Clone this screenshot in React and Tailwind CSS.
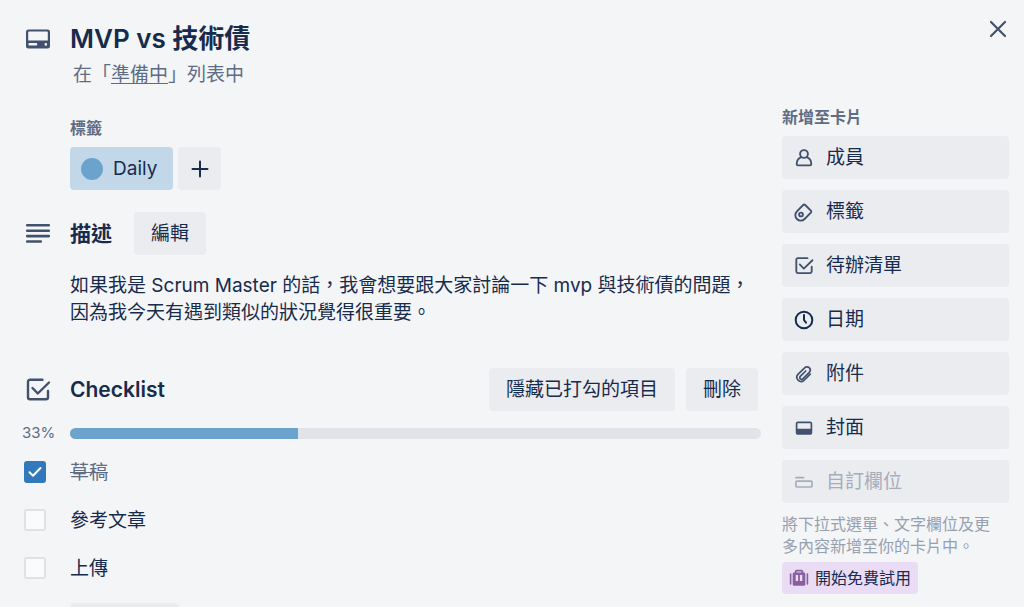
import React, { useState } from 'react';

const stroke = {
  fill: 'none',
  stroke: 'currentColor',
  strokeLinecap: 'round',
  strokeLinejoin: 'round',
  'aria-hidden': true,
};

function CardIcon() {
  return (
    <svg width="26" height="22" viewBox="0 0 26 22" aria-hidden="true" fill="currentColor">
      <path
        fillRule="evenodd"
        d="M3.500 1.400h19a2.500 2.500 0 0 1 2.500 2.500v14.200a2.500 2.500 0 0 1-2.500 2.500h-19A2.500 2.500 0 0 1 1 18.100V3.900a2.500 2.500 0 0 1 2.500-2.500Zm.5 2.200a.8.8 0 0 0-.8.8v8.200h19.600V4.400a.8.8 0 0 0-.8-.8H4Zm.6 11.500a1.200 1.200 0 0 0 0 2.500h6.400a1.200 1.200 0 0 0 0-2.500H4.600Zm16.200 0a1.300 1.300 0 1 0 0 2.600 1.300 1.300 0 0 0 0-2.600Z"
      />
    </svg>
  );
}

function LinesIcon() {
  return (
    <svg width="26" height="22" viewBox="0 0 26 22" strokeWidth="2.600" {...stroke}>
      <path d="M2.200 2.300h21.600M2.200 7.700h21.600M2.200 13.100h21.600M2.200 18.500h13.600" />
    </svg>
  );
}

function CheckSquare({ size = 26, width = 2.4 }) {
  return (
    <svg width={size} height={size} viewBox="0 0 26 26" strokeWidth={width} {...stroke}>
      <path d="M17.500 2.800H5a2 2 0 0 0-2 2v15.500a2 2 0 0 0 2 2h16a2 2 0 0 0 2-2V14" />
      <path d="M7.500 11l5.300 5.500L24 5.500" />
    </svg>
  );
}

function MemberIcon() {
  return (
    <svg width="22" height="22" viewBox="0 0 22 22" strokeWidth="1.900" {...stroke}>
      <circle cx="11" cy="7" r="3.900" />
      <path d="M8.200 10.200C5.500 11.300 3.700 13.600 3.700 17.200c0 .8.400 1.200 1.200 1.200h12.200c.8 0 1.200-.4 1.200-1.200 0-3.600-1.800-5.900-4.500-7" />
    </svg>
  );
}

function LabelIcon() {
  return (
    <svg width="22" height="22" viewBox="0 0 22 22" strokeWidth="1.900" {...stroke}>
      <path d="M3.900 10.400 10.200 4a1.500 1.500 0 0 1 2 0l5.700 5.700a1.500 1.500 0 0 1 0 2l-6.300 6.300a5.400 5.400 0 0 1-7.700-7.600Z" />
      <circle cx="8" cy="13.500" r="1.900" />
    </svg>
  );
}

function ClockIcon() {
  return (
    <svg width="22" height="22" viewBox="0 0 22 22" strokeWidth="2" className="text-[#172b4d]" {...stroke}>
      <circle cx="11" cy="11" r="8.300" />
      <path d="M11 6v5l2 2.700" />
    </svg>
  );
}

function ClipIcon() {
  return (
    <svg width="22" height="22" viewBox="0 0 22 22" strokeWidth="1.700" {...stroke}>
      <path d="M17.300 11.200l-6.400 6.300a4.300 4.300 0 0 1-6-6.100l6.700-6.600a3.200 3.200 0 0 1 4.700 4.500l-6.500 6.500a1.700 1.700 0 0 1-2.500-2.400l5.400-5.400" />
    </svg>
  );
}

function CoverIcon() {
  return (
    <svg width="22" height="22" viewBox="0 0 22 22" strokeWidth="1.700" {...stroke}>
      <rect x="3.600" y="5.300" width="14.800" height="11.400" rx="1.300" />
      <path fill="currentColor" d="M3.800 12.600h14.400v4H3.800z" />
    </svg>
  );
}

function FieldIcon() {
  return (
    <svg width="22" height="22" viewBox="0 0 22 22" strokeWidth="1.700" {...stroke}>
      <path d="M3 6.700h7.500" />
      <rect x="2.900" y="10.200" width="16.200" height="5.800" rx="1.200" />
    </svg>
  );
}

function CaseIcon() {
  return (
    <svg width="20" height="20" viewBox="0 0 20 20" aria-hidden="true" fill="none" stroke="currentColor" strokeLinecap="round">
      <path strokeWidth="1.600" d="M1.600 6v10M18.400 6v10" />
      <path strokeWidth="1.800" strokeLinejoin="round" d="M6.600 5V3.700c0-.7.4-1.100 1.100-1.100h4.600c.7 0 1.100.4 1.100 1.100V5" />
      <path
        fill="currentColor"
        stroke="none"
        fillRule="evenodd"
        d="M5 4.600h10a1.300 1.300 0 0 1 1.300 1.300v10.600a1.300 1.300 0 0 1-1.300 1.300H5a1.300 1.300 0 0 1-1.300-1.300V5.900A1.300 1.300 0 0 1 5 4.600Zm1.700 2.400v6h2.400V7H6.700Zm4.200 0v6h2.400V7h-2.400Z"
      />
    </svg>
  );
}

const actions = [
  { text: '成員', icon: <MemberIcon /> },
  { text: '標籤', icon: <LabelIcon /> },
  { text: '待辦清單', icon: <CheckSquare size={20} width={2.4} /> },
  { text: '日期', icon: <ClockIcon /> },
  { text: '附件', icon: <ClipIcon /> },
  { text: '封面', icon: <CoverIcon /> },
  { text: '自訂欄位', icon: <FieldIcon />, disabled: true },
];

function GrayButton({ children }) {
  return (
    <button type="button" className="flex h-[43px] items-center justify-center rounded-[4px] bg-[#ebecf0] px-[17px]">
      {children}
    </button>
  );
}

function SectionRow({ icon, children }) {
  return (
    <div className="flex items-center">
      <span className="flex w-[48px] shrink-0 pl-[3px] text-[#42526e]">{icon}</span>
      {children}
    </div>
  );
}

export default function App() {
  const [items, setItems] = useState([
    { text: '草稿', done: true },
    { text: '參考文章', done: false },
    { text: '上傳', done: false },
  ]);
  const percent = Math.round((items.filter((i) => i.done).length / items.length) * 100);
  const toggle = (index) =>
    setItems(items.map((item, i) => (i === index ? { ...item, done: !item.done } : item)));

  return (
    <div className="h-screen overflow-hidden bg-[#f4f5f7] pl-[22px] pr-[15px] font-['Inter','Noto_Sans_CJK_TC',sans-serif] text-[19px] leading-[27px] text-[#172b4d]">
      <header className="flex items-start justify-between pt-[17px]">
        <div>
          <SectionRow icon={<CardIcon />}>
            <h1 className="text-[26px] font-semibold leading-[44px]">MVP vs 技術債</h1>
          </SectionRow>
          <p className="pl-[51px] text-[#5e6c84]">
            在「<a href="#list" className="underline underline-offset-2">準備中</a>」列表中
          </p>
        </div>
        <button type="button" aria-label="關閉" className="flex h-[24px] w-[22px] items-center justify-center text-[#42526e]">
          <svg width="20" height="20" viewBox="0 0 20 20" strokeWidth="2.200" {...stroke}>
            <path d="M3 3l14 14M17 3 3 17" />
          </svg>
        </button>
      </header>

      <div className="flex items-start gap-[21px] pt-[18px]">
        <main className="min-w-0 flex-1">
          <section className="pl-[48px] pt-[11px]">
            <h3 className="text-[16px] font-semibold leading-[22px] text-[#5e6c84]">標籤</h3>
            <div className="mt-2 flex gap-[5px]">
              <button type="button" className="flex h-[43px] items-center gap-[10px] rounded-[4px] bg-[#c2d8e9] pl-[11px] pr-4">
                <span className="size-[22px] rounded-full bg-[#6ca3cc]" />
                Daily
              </button>
              <button type="button" aria-label="新增標籤" className="flex size-[43px] items-center justify-center rounded-[4px] bg-[#ebecf0]">
                <svg width="20" height="20" viewBox="0 0 20 20" strokeWidth="2" {...stroke}>
                  <path d="M10 2.500v15M2.500 10h15" />
                </svg>
              </button>
            </div>
          </section>

          <section className="pt-[22px]">
            <SectionRow icon={<LinesIcon />}>
              <h2 className="mr-[22px] text-[21px] font-semibold">描述</h2>
              <GrayButton>編輯</GrayButton>
            </SectionRow>
            <p className="pl-[48px] pt-[17px]">
              如果我是 Scrum Master 的話，我會想要跟大家討論一下 mvp 與技術債的問題，
              <br />
              因為我今天有遇到類似的狀況覺得很重要。
            </p>
          </section>

          <section className="pt-[42px]">
            <SectionRow icon={<CheckSquare />}>
              <h2 className="flex-1 text-[21px] font-semibold">Checklist</h2>
              <div className="flex gap-[11px] pr-[3px]">
                <GrayButton>隱藏已打勾的項目</GrayButton>
                <GrayButton>刪除</GrayButton>
              </div>
            </SectionRow>
            <div className="flex items-center pt-[11px]">
              <span className="w-[48px] shrink-0 text-[15px] leading-[22px] text-[#5e6c84]">{percent}%</span>
              <div className="h-[11px] flex-1 overflow-hidden rounded-full bg-[#e1e3e9]">
                <div className="h-full bg-[#6ca3cc]" style={{ width: `${percent}%` }} />
              </div>
            </div>
            <ul className="pt-1">
              {items.map((item, index) => (
                <li key={item.text}>
                  <label className="flex h-12 items-center">
                    <span className="grid w-[48px] shrink-0 pl-[2px]">
                      <input
                        type="checkbox"
                        checked={item.done}
                        onChange={() => toggle(index)}
                        className="col-start-1 row-start-1 size-[22px] appearance-none rounded-[3px] border-2 border-[#dfe1e6] bg-[#fafbfc] checked:border-[#3179ba] checked:bg-[#3179ba]"
                      />
                      {item.done && (
                        <svg className="pointer-events-none col-start-1 row-start-1 text-white" width="22" height="22" viewBox="0 0 22 22" strokeWidth="2" {...stroke}>
                          <path d="M5.500 11.200l3.500 3.600L16.500 7" />
                        </svg>
                      )}
                    </span>
                    <span className={item.done ? 'text-[#5e6c84] line-through' : ''}>{item.text}</span>
                  </label>
                </li>
              ))}
            </ul>
            <div className="pl-[48px] pt-[11px]">
              <button type="button" aria-label="新增項目" className="block h-[43px] w-[109px] rounded-[4px] bg-[#ebecf0]" />
            </div>
          </section>
        </main>

        <aside className="w-[227px] shrink-0">
          <h3 className="text-[16px] font-semibold leading-[22px] text-[#5e6c84]">新增至卡片</h3>
          <div className="flex flex-col gap-[11px] pt-2">
            {actions.map((action) => (
              <button
                key={action.text}
                type="button"
                disabled={action.disabled}
                className="flex h-[43px] items-center gap-[11px] rounded-[4px] bg-[#ebecf0] pl-[11px] disabled:text-[#a5adba]"
              >
                <span className={`flex w-[22px] justify-center ${action.disabled ? '' : 'text-[#42526e]'}`}>{action.icon}</span>
                {action.text}
              </button>
            ))}
          </div>
          <p className="pr-[5px] pt-[10px] text-[16px] leading-[22px] text-[#97a0af]">
            將下拉式選單、文字欄位及更
            <wbr />
            多內容新增至你的卡片中。
          </p>
          <button type="button" className="mt-[5px] flex h-8 items-center gap-[6px] rounded-[4px] bg-[#eadcf4] px-[7px] text-[16px] leading-[22px]">
            <span className="text-[#89609e]"><CaseIcon /></span>
            開始免費試用
          </button>
        </aside>
      </div>
    </div>
  );
}
